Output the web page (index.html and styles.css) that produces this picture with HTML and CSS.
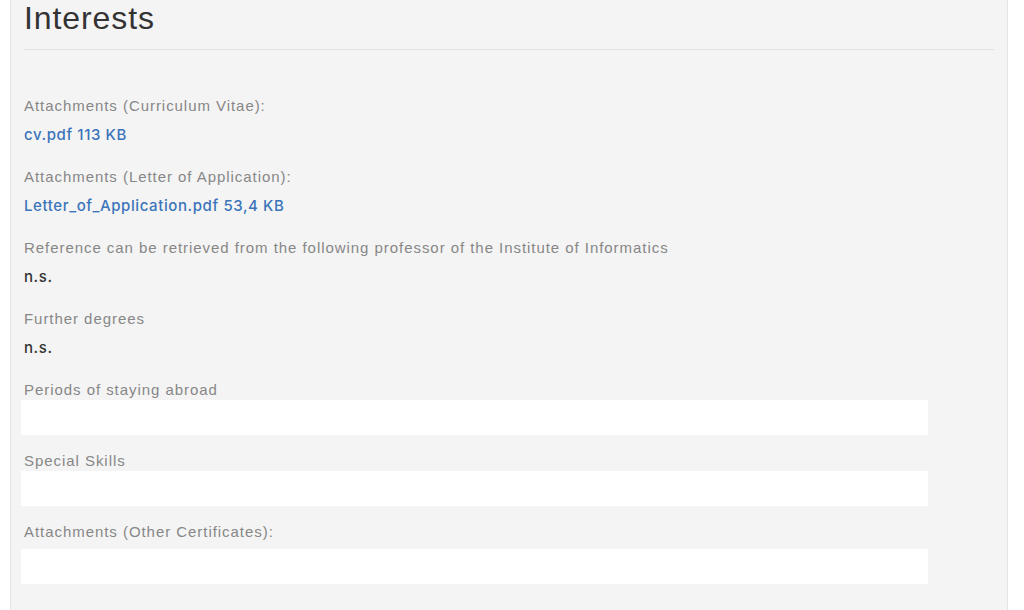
FILE: index.html
```html
<!DOCTYPE html>
<html>
<head>
<meta charset="utf-8">
<link rel="stylesheet" href="styles.css">
</head>
<body>
<div class="panel">
  <h2 class="title">Interests</h2>
  <div class="fields">
    <div class="field">
      <div class="label">Attachments (Curriculum Vitae):</div>
      <a class="value link" href="#">cv.pdf 113 KB</a>
    </div>
    <div class="field">
      <div class="label">Attachments (Letter of Application):</div>
      <a class="value link" href="#">Letter_of_Application.pdf 53,4 KB</a>
    </div>
    <div class="field">
      <div class="label">Reference can be retrieved from the following professor of the Institute of Informatics</div>
      <div class="value">n.s.</div>
    </div>
    <div class="field">
      <div class="label">Further degrees</div>
      <div class="value">n.s.</div>
    </div>
    <div class="field box-field">
      <div class="label">Periods of staying abroad</div>
      <div class="box b1"></div>
    </div>
    <div class="field box-field">
      <div class="label">Special Skills</div>
      <div class="box b2"></div>
    </div>
    <div class="field box-field">
      <div class="label">Attachments (Other Certificates):</div>
      <div class="box b3"></div>
    </div>
  </div>
</div>
</body>
</html>
```

FILE: styles.css
```css
html, body {
  margin: 0;
  padding: 0;
  background: #ffffff;
  font-family: "Liberation Sans", Arial, sans-serif;
  height: 610px;
  overflow: hidden;
}
.panel {
  margin: 0 16px 0 10px;
  background: #f4f4f4;
  border-left: 1px solid #e4e4e4;
  border-right: 1px solid #e4e4e4;
  padding: 0 13px;
  height: 610px;
  box-sizing: border-box;
}
.title {
  margin: 0;
  font-size: 32px;
  line-height: 36px;
  font-weight: 400;
  color: #333333;
  letter-spacing: 0.9px;
  padding-bottom: 13px;
  border-bottom: 1px solid #e2e2e2;
}
.fields {
  padding-top: 46px;
  display: flex;
  flex-direction: column;
}
.field {
  display: flex;
  flex-direction: column;
  margin-bottom: 22px;
}
.label {
  font-size: 15px;
  line-height: 20px;
  color: #878787;
  letter-spacing: 0.95px;
}
.value {
  margin-top: 9px;
  font-family: Inter, "Liberation Sans", sans-serif;
  font-size: 15px;
  line-height: 20px;
  font-weight: 500;
  color: #333333;
  letter-spacing: 0.6px;
  text-decoration: none;
}
.link {
  color: #3b74ba;
}
.box-field {
  margin-bottom: 15px;
}
.box {
  margin-left: -3px;
  width: 907px;
  height: 35px;
  background: #ffffff;
}
.b1 { margin-top: 0; margin-bottom: 1px; }
.b2 { margin-top: 0; margin-bottom: 1px; }
.b3 { margin-top: 7px; }
```
